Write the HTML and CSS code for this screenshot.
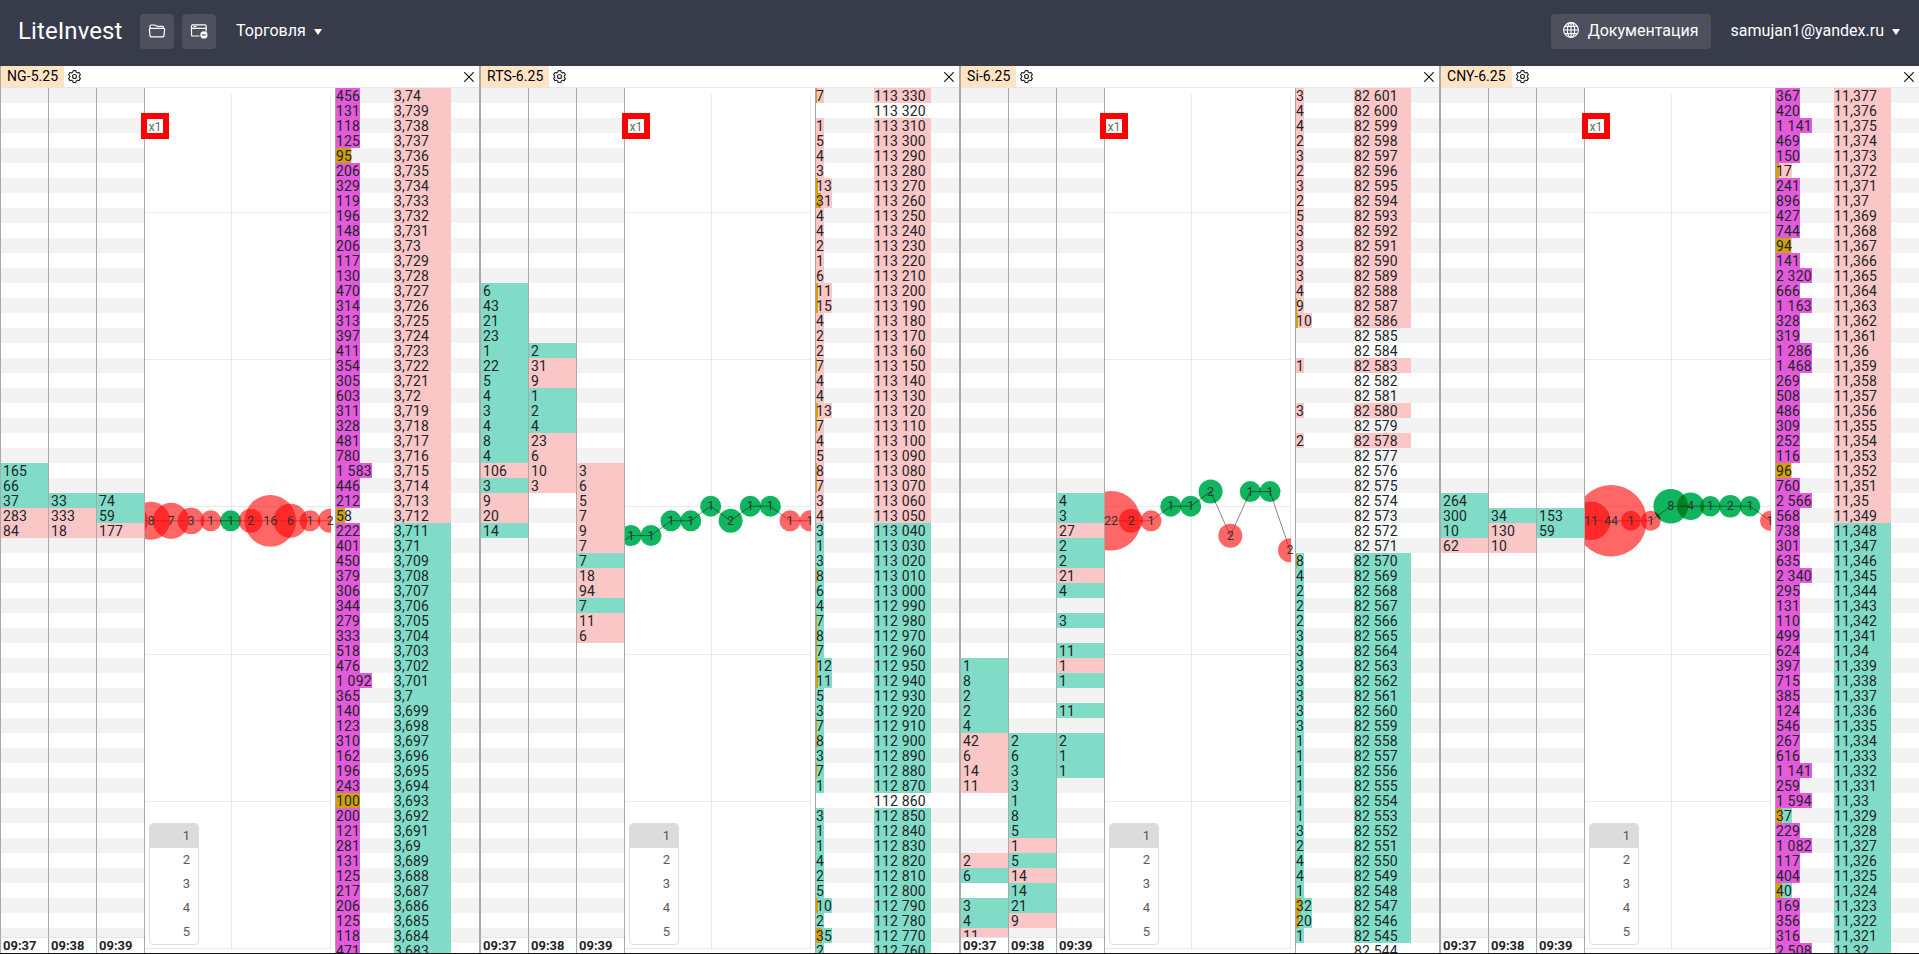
FILE: index.html
```
<!DOCTYPE html>
<html lang="ru">
<head>
<meta charset="utf-8">
<title>LiteInvest</title>
<link rel="stylesheet" href="styles.css">
</head>
<body>
<header class="topbar">
  <div class="brand">LiteInvest</div>
  <button class="btn btn-icon" aria-label="Открыть">
    <svg width="18" height="18" viewBox="0 0 18 18" fill="none" stroke="#fff" stroke-width="1.2" stroke-linejoin="round"><path d="M2 6.4V4.2Q2 3 3.2 3h3.3q.7 0 1.2.5l.8.6q.4.3 1 .3h5q1 0 1 1v1M2.6 6.4h12.8q1.3 0 1.2 1.2l-.6 6q-.1 1.3-1.4 1.3H3.4q-1.3 0-1.4-1.3l-.6-6q-.1-1.2 1.2-1.2z"/></svg>
  </button>
  <button class="btn btn-icon" aria-label="Окно">
    <svg width="18" height="18" viewBox="0 0 18 18" fill="none" stroke="#fff" stroke-width="1.2"><path d="M9.5 14H2.6Q1.5 14 1.5 12.900V4Q1.500 2.800 2.600 2.800H15Q16.200 2.800 16.200 4v5.500M1.500 6.300h14.700"/><path d="M3.500 4.600h3" /><circle cx="13.900" cy="12.900" r="3.600" fill="#fff" stroke="none"/><path d="M12 12.900h3.800" stroke="#4d515d"/></svg>
  </button>
  <div class="menu menu-trade">Торговля<i class="caret"></i></div>
  <div class="spacer"></div>
  <button class="btn btn-docs">
    <svg width="16" height="16" viewBox="0 0 16 16" fill="none" stroke="#fff" stroke-width="1.1"><circle cx="8" cy="8" r="7.400"/><ellipse cx="8" cy="8" rx="3.700" ry="7.400"/><path d="M8 .6v14.800M.6 8h14.800M1.700 4.400h12.600M1.700 11.600h12.600"/></svg>
    <span>Документация</span>
  </button>
  <div class="menu menu-user">samujan1@yandex.ru<i class="caret"></i></div>
</header>
<main class="panels" id="panels"></main>
<script src="app.js"></script>
</body>
</html>
```
FILE: styles.css
```
* { box-sizing: border-box; }
html { overflow: hidden; }
body { margin: 0; height: 954px; overflow: hidden; background: #fff; color: #212529; font-family: Roboto, "Liberation Sans", sans-serif; font-size: 14px; }
.topbar { display: flex; align-items: flex-start; height: 66px; padding: 14px 19px 0 18px; background: #383b4a; color: #fff; font-size: 16px; }
.brand { width: 122px; font-size: 24px; line-height: 35px; letter-spacing: .1px; white-space: nowrap; }
.btn { display: flex; align-items: center; justify-content: center; height: 35px; padding: 0; border: 0; border-radius: 4px; background: #4d515d; color: #fff; font: 500 16px Roboto, "Liberation Sans", sans-serif; }
.btn-icon { width: 34px; margin-right: 8px; padding-bottom: 2px; }
.btn-docs { width: 160px; margin-right: 20px; gap: 9px; padding-bottom: 3px; font-weight: 400; }
.menu { display: flex; align-items: center; height: 33px; white-space: nowrap; }
.menu-trade { margin-left: 12px; }
.caret { width: 0; height: 0; margin-left: 8px; margin-top: 2px; border: 4px solid transparent; border-top: 6px solid #fff; border-bottom: 0; }
.spacer { flex: 1; }
.panels { display: flex; width: 100%; height: 888px; overflow: hidden; border-bottom: 1px solid #111; }
.panel { display: flex; flex-direction: column; flex: 0 0 480px; height: 887px; border-left: 1px solid #a9a9a9; border-right: 1px solid #a9a9a9; overflow: hidden; }
.tabs { display: flex; flex: 0 0 22px; align-items: center; border-bottom: 1px solid #e6e6e6; }
.tab { height: 21px; padding: 0 6px; background: #ffe4c4; color: #000; line-height: 21px; letter-spacing: .08px; white-space: nowrap; }
.gear { margin-left: 4px; }
.close { margin-left: auto; margin-right: 5px; }
.body { display: flex; flex: 0 0 865px; position: relative; overflow: hidden; }
.clusters { display: grid; grid-template-columns: 48px 48px 48px; width: 144px; height: 865px; }
.cluster { display: flex; flex-direction: column; height: 865px; overflow: hidden; border-right: 1px solid #a9a9a9; }
.cells { height: 849px; overflow: hidden; }
.cell { height: 15px; padding-left: 2px; line-height: 16px; letter-spacing: .14px; overflow: hidden; }
.cell:nth-child(odd), .row:nth-child(odd) { background: #f3f3f3; }
.cells .buy, .row .buy { background-color: #80dcc6; }
.cells .sell, .row .sell { background-color: #fac6c6; }
.time { height: 16px; padding-left: 2px; border-top: 1px solid #e6e6e6; font-size: 13px; font-weight: 700; line-height: 16px; background: #fff; }
.chart { position: relative; flex: 0 0 190px; height: 865px; }
.chart svg { display: block; overflow: visible; }
.chart text { font-size: 12.5px; fill: #333; text-anchor: middle; }
.scale { position: absolute; top: 25px; width: 28px; height: 26px; border: 6px solid #f00; background: #fff; color: #6c6c6c; font-size: 12.5px; line-height: 16px; text-align: center; }
.sizes { position: absolute; left: 4px; top: 735px; width: 50px; height: 122px; border: 1px solid #dcdcdc; border-radius: 4px; background: #fff; overflow: hidden; color: #5b5b5b; font-size: 13px; }
.size { height: 24px; padding-right: 8px; line-height: 24px; text-align: right; }
.size.on { background: #dcdcdc; }
.book { flex: 0 0 144px; height: 865px; overflow: hidden; border-left: 1px solid #a9a9a9; }
.row { display: grid; grid-template-columns: 58px 57px 1fr; height: 15px; line-height: 16px; letter-spacing: .14px; white-space: nowrap; }
.vol { justify-self: start; height: 15px; }
.row .big { background: #e35adb; }
.row .full { background: #d0a400; }
.row .last { background-color: #eee6e6; }
.price { height: 15px; overflow: hidden; }
```
FILE: app.js
```
const ROWS = 58;
const LEFT = 145;
const panels = [
  { name: 'NG-5.25', box: -4, digits: 3, start: 3740, step: 1, split: 29, last: 28,
    vol: '456,131,118,125,95,206,329,119,196,148,206,117,130,470,314,313,397,411,354,305,603,311,328,481,780,1583,446,212,58,222,401,450,379,306,344,279,333,518,476,1092,365,140,123,310,162,196,243,100,200,121,281,131,125,217,206,125,118,471',
    cols: [
      { 25: '165+', 26: '66+', 27: '37+', 28: '283-', 29: '84-' },
      { 27: '33+', 28: '333-', 29: '18-' },
      { 27: '74+', 28: '59+', 29: '177-' }],
    dots: [[131, 520.8, 17, '', '-'], [151, 520.8, 19, 8, '-'], [171, 520.8, 18, 7, '-'], [191, 520.8, 13.3, 3, '-'], [210.800, 520.8, 10.5, 1, '-'], [230.700, 520.8, 10.5, 1, '+'], [250.600, 520.8, 12, 2, '-'], [270.300, 520.8, 25.8, 16, '-'], [290.300, 520.8, 17, 6, '-'], [310, 520.8, 10.5, 1, '-'], [330, 520.8, 12, 2, '-']] },
  { name: 'RTS-6.25', box: -3, digits: 0, start: 113330, step: 10, split: 29,
    vol: '7,,1,5,4,3,13,31,4,4,2,1,6,11,15,4,2,2,7,4,4,13,7,4,5,8,7,3,4,3,1,3,8,6,4,7,8,7,12,11,5,3,7,8,3,7,1,,3,1,1,4,2,5,10,2,35,2',
    cols: [
      { 13: '6+', 14: '43+', 15: '21+', 16: '23+', 17: '1+', 18: '22+', 19: '5+', 20: '4+', 21: '3+', 22: '4+', 23: '8+', 24: '4+', 25: '106-', 26: '3+', 27: '9-', 28: '20-', 29: '14+' },
      { 17: '2+', 18: '31-', 19: '9-', 20: '1+', 21: '2+', 22: '4+', 23: '23-', 24: '6-', 25: '10-', 26: '3-' },
      { 25: '3-', 26: '6-', 27: '5-', 28: '7-', 29: '9-', 30: '7-', 31: '7+', 32: '18-', 33: '94-', 34: '7+', 35: '11-', 36: '6-' }],
    dots: [[131, 550, 0, '', '+'], [151, 535.500, 10.5, 1, '+'], [171, 535.500, 10.5, 1, '+'], [191, 520.8, 10.5, 1, '+'], [210.800, 520.8, 10.5, 1, '+'], [230.700, 506.2, 10.5, 1, '+'], [250.600, 520.8, 12, 2, '+'], [270.300, 506.2, 10.5, 1, '+'], [290.300, 506.2, 10.5, 1, '+'], [310, 520.8, 10.5, 1, '-'], [330, 520.8, 10.5, 1, '-']] },
  { name: 'Si-6.25', box: -5, digits: 0, start: 82601, step: 1, split: 29,
    vol: '3,4,4,2,3,2,3,2,5,3,3,3,3,4,9,10,,,1,,,3,,2,,,,,,,,8,4,2,2,2,3,3,3,3,3,3,3,1,1,1,1,1,1,3,2,4,4,1,32,20,1,',
    cols: [
      { 38: '1+', 39: '8+', 40: '2+', 41: '2+', 42: '4+', 43: '42-', 44: '6-', 45: '14-', 46: '11-', 51: '2-', 52: '6+', 54: '3+', 55: '4+', 56: '11-' },
      { 43: '2+', 44: '6+', 45: '3+', 46: '3+', 47: '1+', 48: '8+', 49: '5+', 50: '1-', 51: '5+', 52: '14-', 53: '14+', 54: '21+', 55: '9-' },
      { 27: '4+', 28: '3+', 29: '27-', 30: '2+', 31: '2+', 32: '21-', 33: '4+', 35: '3+', 37: '11+', 38: '1-', 39: '1+', 41: '11+', 43: '2+', 44: '1+', 45: '1+' }],
    dots: [[151, 520.8, 29.700, 22, '-'], [171, 520.8, 12, 2, '-'], [191, 520.8, 10.5, 1, '-'], [210.800, 506.2, 10.5, 1, '+'], [230.700, 506.2, 10.5, 1, '+'], [250.600, 491.600, 12, 2, '+'], [270.300, 535.700, 12, 2, '-'], [290.300, 491.600, 10.5, 1, '+'], [310, 491.600, 10.5, 1, '+'], [330, 550.300, 12, 2, '-']] },
  { name: 'CNY-6.25', box: -3, digits: 3, start: 11377, step: 1, split: 29,
    vol: '367,420,1141,469,150,17,241,896,427,744,94,141,2320,666,1163,328,319,1286,1468,269,508,486,309,252,116,96,760,2566,568,738,301,635,2340,295,131,110,499,624,397,715,385,124,546,267,616,1141,259,1594,37,229,1082,117,404,40,169,356,316,2508',
    cols: [
      { 27: '264+', 28: '300+', 29: '10+', 30: '62-' },
      { 28: '34+', 29: '130-', 30: '10-' },
      { 28: '153+', 29: '59+' }],
    dots: [[151, 520.8, 19.300, 11, '-'], [171, 520.8, 35.800, 44, '-'], [191, 520.8, 10, 1, '-'], [210.800, 520.8, 10, 1, '-'], [230.700, 506.2, 17.300, 8, '+'], [250.600, 506.2, 13.700, 4, '+'], [270.300, 506.2, 10.3, 1, '+'], [290.300, 506.2, 11.3, 2, '+'], [310, 506.2, 10.3, 1, '+'], [330, 520.8, 10, 1, '-']] }
];

const group = n => String(n).replace(/\B(?=(\d{3})+$)/g, ' ');
const side = s => s === '+' ? 'buy' : 'sell';

function clusters(p) {
  return p.cols.map((col, c) => {
    let cells = '';
    for (let i = 0; i < ROWS; i++) {
      const v = col[i];
      cells += v ? `<div class="cell ${side(v.slice(-1))}">${v.slice(0, -1)}</div>` : '<div class="cell"></div>';
    }
    return `<div class="cluster"><div class="cells">${cells}</div><div class="time">09:${37 + c}</div></div>`;
  }).join('');
}

function chart(p, n) {
  const d = p.dots.map(([x, y, r, t, s]) => ({ x: x - LEFT, y: y - 88, r, t, s }));
  const grid = [124, 271, 418, 566, 713, 860].map(y => `<path d="M0 ${y}.5H186"/>`).join('')
    + [86, 185].map(x => `<path d="M${x}.5 6V861"/>`).join('');
  const line = d.map(o => `${o.x},${o.y}`).join(' ');
  const dots = d.map(o => o.s === '+'
    ? `<circle cx="${o.x}" cy="${o.y}" r="${o.r}" fill="#10b560" style="mix-blend-mode:multiply"/>`
    : `<circle cx="${o.x}" cy="${o.y}" r="${o.r}" fill="#f00" fill-opacity=".6"/>`).join('');
  const text = d.map(o => `<text x="${o.x}" y="${o.y + 4}">${o.t}</text>`).join('');
  return `<div class="chart"><svg width="190" height="865"><clipPath id="plot${n}"><rect width="186" height="861"/></clipPath>
    <g stroke="#000" stroke-opacity=".08">${grid}</g>
    <g clip-path="url(#plot${n})"><polyline points="${line}" fill="none" stroke="#888"/>${dots}</g>${text}</svg>
    <div class="scale" style="left:${p.box}px">x1</div>
    <div class="sizes">${[1, 2, 3, 4, 5].map(k => `<div class="size${k === 1 ? ' on' : ''}">${k}</div>`).join('')}</div></div>`;
}

function book(p) {
  return p.vol.split(',').map((v, i) => {
    const raw = p.start - p.step * i;
    const price = p.digits ? String(raw / 1000).replace('.', ',') : group(raw);
    const s = v === '' ? '' : i < p.split ? 'sell' : 'buy';
    const cls = v > 100 ? 'big' : v == 100 ? 'full' : i === p.last ? 'last' : s;
    const fill = v && v < 100 && v > 6 ? ` style="background-image:linear-gradient(90deg,#d0a400 ${v}%,transparent ${v}%)"` : '';
    return `<div class="row"><span class="vol ${cls}"${fill}>${v && group(v)}</span><span class="price ${s}">${price}</span></div>`;
  }).join('');
}

const gear = '<svg class="gear" width="13" height="13" viewBox="0 0 13 13" fill="none" stroke="#222" stroke-width="1.1"><path d="M5.200 .6h2.600l.5 1.600 1.200.7 1.600-.4 1.300 2.200-1.100 1.200v1.300l1.100 1.200-1.300 2.200-1.600-.4-1.200.7-.5 1.600H5.200l-.5-1.600-1.200-.7-1.600.4L.6 8.400l1.100-1.200V5.900L.6 4.700l1.300-2.200 1.600.4 1.200-.7z" stroke-linejoin="round"/><circle cx="6.500" cy="6.500" r="2"/></svg>';
const cross = '<svg class="close" width="10" height="10" viewBox="0 0 10 10" stroke="#111" stroke-width="1.200"><path d="M.3.3l9.400 9.400M9.700.3L.3 9.700"/></svg>';

document.getElementById('panels').innerHTML = panels.map((p, n) =>
  `<section class="panel"><div class="tabs"><div class="tab">${p.name}</div>${gear}${cross}</div>
  <div class="body"><div class="clusters">${clusters(p)}</div>${chart(p, n)}<div class="book">${book(p)}</div></div></section>`).join('');
```
